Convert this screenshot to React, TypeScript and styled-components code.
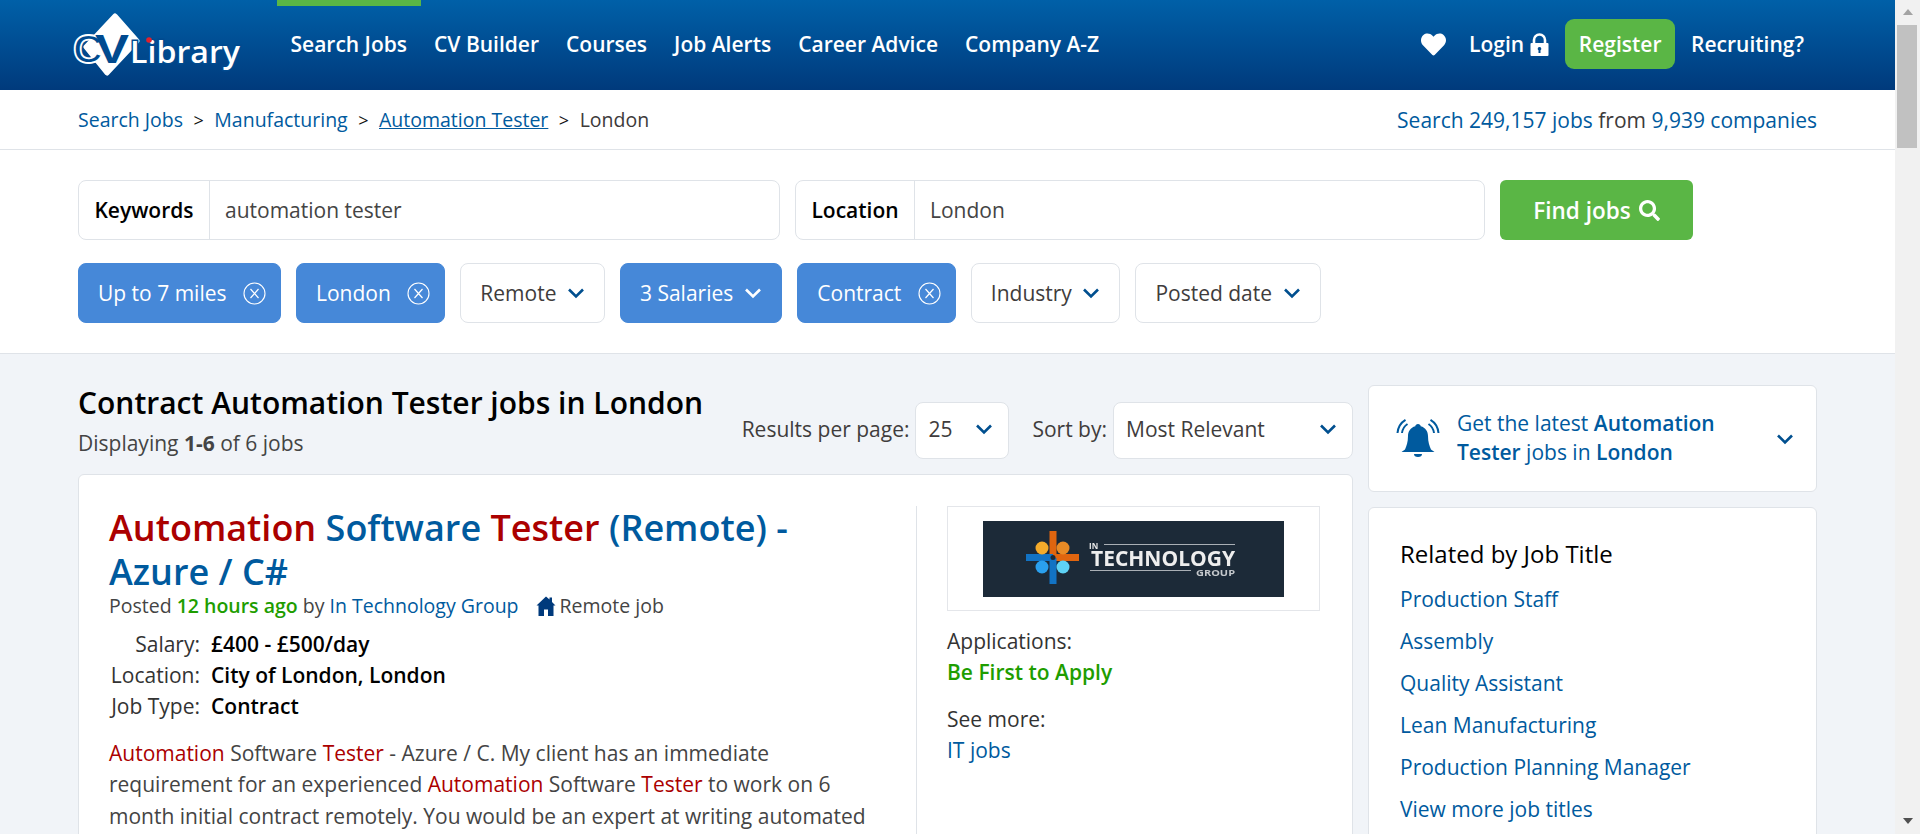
import React from "react";
import styled, { createGlobalStyle } from "styled-components";
import { FaHeart, FaSearch } from "react-icons/fa";

const GlobalStyle = createGlobalStyle`
  html, body {
    margin: 0;
    height: 100%;
    overflow: hidden;
  }
  body {
    font-family: "Open Sans", "Liberation Sans", sans-serif;
    font-size: 21px;
    color: #333;
    background: #f1f4f8;
  }
  a {
    color: inherit;
    text-decoration: none;
  }
`;

const linkBlue = "#005a9e";
const red = "#ab0000";

const Chevron = ({ color = "#004f8f" }: { color?: string }) => (
  <svg width="18" height="12" viewBox="0 0 18 12" fill="none">
    <path d="M2 2.5 9 9.5 16 2.5" stroke={color} strokeWidth="2.6" />
  </svg>
);

const CloseCircle = () => (
  <svg width="23" height="23" viewBox="0 0 23 23" fill="none" stroke="#fff">
    <circle cx="11.5" cy="11.5" r="10.5" strokeWidth="1.1" />
    <path d="M7.5 7 15.5 16M15.5 7 7.5 16" strokeWidth="1.2" />
  </svg>
);

const Logo = () => (
  <svg width="170" height="64" viewBox="0 0 170 64">
    <path
      d="M42 3 64 28 34 60 13 34Z"
      fill="#fff"
      stroke="#fff"
      strokeWidth="5"
      strokeLinejoin="round"
    />
    <text
      x="0"
      y="50"
      fontFamily="Liberation Sans"
      fontWeight="700"
      fontSize="41"
      fill="#004a8f"
      stroke="#fff"
      strokeWidth="1.8"
    >
      C
    </text>
    <text
      x="22"
      y="50"
      fontFamily="Liberation Sans"
      fontWeight="700"
      fontSize="40"
      fill="#004a8f"
      textLength="34"
      lengthAdjust="spacingAndGlyphs"
    >
      V
    </text>
    <text
      x="57"
      y="50"
      fontFamily="Open Sans"
      fontWeight="600"
      fontSize="31"
      fill="#fff"
      stroke="#004a8f"
      strokeWidth="3"
      paintOrder="stroke"
      textLength="110"
      lengthAdjust="spacingAndGlyphs"
    >
      Library
    </text>
    <circle cx="76" cy="27" r="2.8" fill="#e2202c" />
  </svg>
);

const Padlock = () => (
  <svg width="19" height="23" viewBox="0 0 19 23">
    <path d="M4 11V7a5.5 5.5 0 0 1 11 0v4" fill="none" stroke="#fff" strokeWidth="2.6" />
    <path
      fillRule="evenodd"
      d="M1.5 10h16a1 1 0 0 1 1 1v11a1 1 0 0 1-1 1h-16a1 1 0 0 1-1-1V11a1 1 0 0 1 1-1ZM9.5 14a1.8 1.8 0 0 0-1 3.3V20h2v-2.7a1.8 1.8 0 0 0-1-3.3Z"
      fill="#fff"
    />
  </svg>
);

const House = () => (
  <svg width="20" height="20" viewBox="0 0 20 20">
    <path d="M10 0.500 0.500 9.500H2.500V20H8V13.500H12V20H17.500V9.500H19.500L16 6V1.500H13.500V3.500Z" fill="#003a7c" />
  </svg>
);

const AlertBell = () => (
  <svg width="44" height="43" viewBox="0 0 44 43" fill="none">
    <path
      d="M22 7c-1.600 0-2.500 1-2.700 2.200C14.500 10.500 12 14.500 12 19c0 6-1.500 10-3 13.500L5.500 35h33L35 32.500C33.500 29 32 25 32 19c0-4.500-2.500-8.500-7.300-9.800C24.500 8 23.600 7 22 7Z"
      fill="#005a9e"
    />
    <path d="M18 37h8a4 3 0 0 1-8 0Z" fill="#005a9e" />
    <path
      d="M1.500 16C2 10 5 5.500 9.500 2.800M6 16C6.500 12 8.500 9 11.500 7M42.500 16C42 10 39 5.500 34.500 2.800M38 16C37.500 12 35.500 9 32.500 7"
      stroke="#005a9e"
      strokeWidth="2"
    />
  </svg>
);

const CompanyLogo = () => (
  <svg width="301" height="76" viewBox="0 0 301 76">
    <rect width="301" height="76" fill="#1c2a38" />
    <g filter="blur(0.4px)">
      <rect x="66.500" y="10" width="7" height="26" fill="#e0650f" />
      <rect x="70" y="33" width="26" height="7" fill="#e0650f" />
      <rect x="43" y="33" width="27" height="7" fill="#1273c4" />
      <rect x="66.500" y="37" width="7" height="26" fill="#1273c4" />
      <circle cx="59" cy="27" r="6.500" fill="#f4ab2b" />
      <circle cx="80" cy="27" r="6.500" fill="#e98b26" />
      <circle cx="59" cy="46" r="6.500" fill="#2aa0ee" />
      <circle cx="80" cy="46" r="6.500" fill="#5ed2f5" />
      <circle cx="70" cy="36.500" r="2.500" fill="#1c2a38" />
      <text x="106" y="28" fontFamily="Open Sans" fontWeight="700" fontSize="8" fill="#e8e8e8">
        IN
      </text>
      <path d="M121 23.500H252M107 49.500H208" stroke="#a9afb5" strokeWidth="1" />
      <text
        x="108"
        y="45"
        fontFamily="Open Sans"
        fontWeight="700"
        fontSize="21"
        fill="#eee"
        textLength="144"
        lengthAdjust="spacingAndGlyphs"
      >
        TECHNOLOGY
      </text>
      <text
        x="213"
        y="55"
        fontFamily="Open Sans"
        fontWeight="700"
        fontSize="8.500"
        fill="#c4c8cc"
        textLength="39"
        lengthAdjust="spacingAndGlyphs"
      >
        GROUP
      </text>
    </g>
  </svg>
);

const App = () => {
  return (
    <Screen>
      <GlobalStyle />
      <Page>
        <Header>
          <LogoLink href="#">
            <Logo />
          </LogoLink>
          <Nav>
            <NavItem href="#" $active>
              Search Jobs
            </NavItem>
            <NavItem href="#">CV Builder</NavItem>
            <NavItem href="#">Courses</NavItem>
            <NavItem href="#">Job Alerts</NavItem>
            <NavItem href="#">Career Advice</NavItem>
            <NavItem href="#">Company A-Z</NavItem>
          </Nav>
          <UserMenu>
            <HeartLink href="#">
              <FaHeart size={25} />
            </HeartLink>
            <LoginLink href="#">
              Login <Padlock />
            </LoginLink>
            <RegisterButton href="#">Register</RegisterButton>
            <RecruitingLink href="#">Recruiting?</RecruitingLink>
          </UserMenu>
        </Header>

        <BreadcrumbBar>
          <Breadcrumbs>
            <BlueLink href="#">Search Jobs</BlueLink>
            <Separator>&gt;</Separator>
            <BlueLink href="#">Manufacturing</BlueLink>
            <Separator>&gt;</Separator>
            <BlueLink href="#" $underline>
              Automation Tester
            </BlueLink>
            <Separator>&gt;</Separator>
            <span>London</span>
          </Breadcrumbs>
          <JobStats>
            <BlueLink href="#">Search 249,157 jobs</BlueLink> from{" "}
            <BlueLink href="#">9,939 companies</BlueLink>
          </JobStats>
        </BreadcrumbBar>

        <SearchSection>
          <SearchRow>
            <SearchField $width={702}>
              <FieldLabel $width={130}>Keywords</FieldLabel>
              <FieldValue>automation tester</FieldValue>
            </SearchField>
            <SearchField $width={690}>
              <FieldLabel $width={118}>Location</FieldLabel>
              <FieldValue>London</FieldValue>
            </SearchField>
            <FindButton>
              Find jobs <FaSearch size={21} />
            </FindButton>
          </SearchRow>
          <FilterRow>
            <Chip $active>
              Up to 7 miles
              <CloseCircle />
            </Chip>
            <Chip $active>
              London
              <CloseCircle />
            </Chip>
            <Chip>
              Remote
              <Chevron />
            </Chip>
            <Chip $active $menu>
              3 Salaries
              <Chevron color="#fff" />
            </Chip>
            <Chip $active>
              Contract
              <CloseCircle />
            </Chip>
            <Chip>
              Industry
              <Chevron />
            </Chip>
            <Chip>
              Posted date
              <Chevron />
            </Chip>
          </FilterRow>
        </SearchSection>

        <Main>
          <Results>
            <ResultsHead>
              <div>
                <PageTitle>Contract Automation Tester jobs in London</PageTitle>
                <Displaying>
                  Displaying <b>1-6</b> of 6 jobs
                </Displaying>
              </div>
              <Controls>
                <span>Results per page:</span>
                <SelectBox $width={94}>
                  25
                  <Chevron />
                </SelectBox>
                <SortLabel>Sort by:</SortLabel>
                <SelectBox $width={240}>
                  Most Relevant
                  <Chevron />
                </SelectBox>
              </Controls>
            </ResultsHead>

            <JobCard>
              <JobMain>
                <JobTitle>
                  <mark>Automation</mark> Software <mark>Tester</mark> (Remote) - Azure / C#
                </JobTitle>
                <JobMeta>
                  <span>
                    Posted <Fresh>12 hours ago</Fresh> by <BlueLink href="#">In Technology Group</BlueLink>
                  </span>
                  <RemoteTag>
                    <House />
                    Remote job
                  </RemoteTag>
                </JobMeta>
                <JobFacts>
                  <dt>Salary:</dt>
                  <dd>£400 - £500/day</dd>
                  <dt>Location:</dt>
                  <dd>City of London, London</dd>
                  <dt>Job Type:</dt>
                  <dd>Contract</dd>
                </JobFacts>
                <JobText>
                  <em>Automation</em> Software <em>Tester</em> - Azure / C. My client has an immediate
                  requirement for an experienced <em>Automation</em> Software <em>Tester</em> to work on 6
                  month initial contract remotely. You would be an expert at writing automated tests
                </JobText>
              </JobMain>
              <JobAside>
                <LogoFrame>
                  <CompanyLogo />
                </LogoFrame>
                <AsideBlock>
                  <div>Applications:</div>
                  <Fresh>Be First to Apply</Fresh>
                </AsideBlock>
                <AsideBlock>
                  <div>See more:</div>
                  <BlueLink href="#">IT jobs</BlueLink>
                </AsideBlock>
              </JobAside>
            </JobCard>
          </Results>

          <Sidebar>
            <AlertCard>
              <AlertBell />
              <AlertText>
                Get the latest <b>Automation Tester</b> jobs in <b>London</b>
              </AlertText>
              <Chevron />
            </AlertCard>
            <RelatedCard>
              <RelatedTitle>Related by Job Title</RelatedTitle>
              <RelatedLink href="#">Production Staff</RelatedLink>
              <RelatedLink href="#">Assembly</RelatedLink>
              <RelatedLink href="#">Quality Assistant</RelatedLink>
              <RelatedLink href="#">Lean Manufacturing</RelatedLink>
              <RelatedLink href="#">Production Planning Manager</RelatedLink>
              <RelatedLink href="#">View more job titles</RelatedLink>
            </RelatedCard>
          </Sidebar>
        </Main>
      </Page>
      <ScrollTrack>
        <ScrollArrow $dir="up" />
        <ScrollThumb />
        <ScrollArrow $dir="down" />
      </ScrollTrack>
    </Screen>
  );
};

const Screen = styled.div`
  display: flex;
  width: 1920px;
  height: 834px;
  overflow: hidden;
`;
const Page = styled.div`
  width: 1895px;
  flex-shrink: 0;
`;
const Header = styled.header`
  display: flex;
  align-items: flex-start;
  height: 90px;
  padding: 0 91px 0 73px;
  box-sizing: border-box;
  background: linear-gradient(#0060a8, #003a7c);
`;
const LogoLink = styled.a`
  display: block;
  width: 170px;
  margin: 13px 34px 0 0;
`;
const Nav = styled.nav`
  display: flex;
`;
const NavItem = styled.a<{ $active?: boolean }>`
  padding: 0 13.500px;
  height: 90px;
  box-sizing: border-box;
  font-size: 21px;
  font-weight: 600;
  color: #fff;
  border-top: 6px solid ${(p) => (p.$active ? "#5ab645" : "transparent")};
  line-height: 76px;
`;
const UserMenu = styled.div`
  display: flex;
  align-items: center;
  margin-left: auto;
  height: 88px;
  color: #fff;
  font-weight: 600;
`;
const HeartLink = styled.a`
  display: flex;
  margin-right: 23px;
`;
const LoginLink = styled.a`
  display: flex;
  align-items: center;
  gap: 6px;
  margin-right: 16px;
`;
const RegisterButton = styled.a`
  display: flex;
  align-items: center;
  justify-content: center;
  width: 110px;
  height: 50px;
  border-radius: 9px;
  background: #5ab645;
`;
const RecruitingLink = styled.a`
  margin-left: 16px;
`;
const BreadcrumbBar = styled.div`
  display: flex;
  align-items: center;
  justify-content: space-between;
  height: 60px;
  padding: 0 78px;
  background: #fff;
  border-bottom: 1px solid #dfe3e8;
  box-sizing: border-box;
`;
const Breadcrumbs = styled.div`
  display: flex;
  align-items: center;
  gap: 10.500px;
  font-size: 19.500px;
  color: #3d3a3a;
`;
const Separator = styled.span`
  color: #111;
  font-size: 18px;
`;
const BlueLink = styled.a<{ $underline?: boolean }>`
  color: ${linkBlue};
  text-decoration: ${(p) => (p.$underline ? "underline" : "none")};
`;
const JobStats = styled.div`
  color: #3d3a3a;
`;
const SearchSection = styled.section`
  height: 204px;
  padding: 30px 78px 0;
  box-sizing: border-box;
  background: #fff;
  border-bottom: 1px solid #dfe3e8;
`;
const SearchRow = styled.div`
  display: flex;
  gap: 15px;
`;
const SearchField = styled.div<{ $width: number }>`
  display: flex;
  width: ${(p) => p.$width}px;
  height: 60px;
  box-sizing: border-box;
  border: 1px solid #dfe3e8;
  border-radius: 8px;
`;
const FieldLabel = styled.div<{ $width: number }>`
  display: flex;
  align-items: center;
  justify-content: center;
  width: ${(p) => p.$width}px;
  border-right: 1px solid #dfe3e8;
  color: #000;
  font-weight: 600;
`;
const FieldValue = styled.div`
  display: flex;
  align-items: center;
  padding-left: 15px;
  color: #444;
`;
const FindButton = styled.button`
  display: flex;
  align-items: center;
  justify-content: center;
  gap: 8px;
  width: 193px;
  height: 60px;
  border: 0;
  border-radius: 6px;
  background: #5ab645;
  color: #fff;
  font-family: inherit;
  font-size: 22.500px;
  font-weight: 600;
`;
const FilterRow = styled.div`
  display: flex;
  gap: 15px;
  margin-top: 23px;
`;
const Chip = styled.div<{ $active?: boolean; $menu?: boolean }>`
  display: flex;
  align-items: center;
  gap: ${(p) => (p.$menu ? "11px" : p.$active ? "16.500px" : "10.500px")};
  height: 60px;
  padding: 0 ${(p) => (p.$active && !p.$menu ? "14px" : "19px")} 0 19px;
  box-sizing: border-box;
  border-radius: 8px;
  background: ${(p) => (p.$active ? "#4688d8" : "#fff")};
  border: 1px solid ${(p) => (p.$active ? "#4688d8" : "#dfe3e8")};
  color: ${(p) => (p.$active ? "#fff" : "#403c3c")};
`;
const Main = styled.main`
  display: grid;
  grid-template-columns: 1275px 449px;
  gap: 15px;
  padding: 31px 78px 0;
`;
const Results = styled.div``;
const ResultsHead = styled.div`
  display: flex;
  justify-content: space-between;
  height: 89px;
`;
const PageTitle = styled.h1`
  margin: 0;
  font-size: 30px;
  line-height: 36px;
  font-weight: 600;
  color: #000;
`;
const Displaying = styled.div`
  margin-top: 6px;
  line-height: 32px;
  color: #444;
`;
const Controls = styled.div`
  display: flex;
  align-items: center;
  gap: 6px;
  height: 57px;
  margin-top: 17px;
  color: #403c3c;
  span {
    margin-bottom: 3px;
  }
`;
const SortLabel = styled.span`
  margin-left: 17px;
`;
const SelectBox = styled.div<{ $width: number }>`
  display: flex;
  align-items: center;
  justify-content: space-between;
  width: ${(p) => p.$width}px;
  height: 57px;
  padding: 0 15px 3px 12px;
  box-sizing: border-box;
  background: #fff;
  border: 1px solid #dfe3e8;
  border-radius: 8px;
`;
const JobCard = styled.article`
  display: flex;
  padding: 31px 0 0 30px;
  box-sizing: border-box;
  height: 400px;
  background: #fff;
  border: 1px solid #dfe3e8;
  border-radius: 6px;
`;
const JobMain = styled.div`
  width: 808px;
  padding-right: 31px;
  box-sizing: border-box;
  border-right: 1px solid #dfe3e8;
`;
const JobTitle = styled.h2`
  margin: 0;
  font-size: 36px;
  line-height: 44px;
  font-weight: 600;
  color: ${linkBlue};
  mark {
    background: none;
    color: ${red};
  }
`;
const JobMeta = styled.div`
  display: flex;
  line-height: 24px;
  font-size: 19.500px;
  color: #444;
`;
const Fresh = styled.span`
  color: #1e9d00;
  font-weight: 600;
`;
const RemoteTag = styled.span`
  display: flex;
  align-items: center;
  gap: 4px;
  margin-left: 17px;
`;
const JobFacts = styled.dl`
  display: grid;
  grid-template-columns: 91px 1fr;
  column-gap: 11px;
  margin: 11px 0 0;
  line-height: 31.200px;
  dt {
    text-align: right;
    color: #333;
  }
  dd {
    margin: 0;
    font-weight: 600;
    color: #000;
  }
`;
const JobText = styled.p`
  margin: 15px 0 0;
  line-height: 31.600px;
  color: #444;
  em {
    font-style: normal;
    color: ${red};
  }
`;
const JobAside = styled.aside`
  width: 435px;
  padding: 0 32px 0 30px;
  box-sizing: border-box;
`;
const LogoFrame = styled.div`
  display: flex;
  align-items: center;
  justify-content: center;
  height: 103px;
  border: 1px solid #e4e6ea;
`;
const AsideBlock = styled.div`
  margin-top: 15px;
  line-height: 31px;
  color: #333;
  & + & {
    margin-top: 16px;
  }
`;
const Sidebar = styled.aside`
  display: flex;
  flex-direction: column;
  gap: 15px;
`;
const AlertCard = styled.div`
  display: flex;
  align-items: center;
  height: 107px;
  padding: 0 22px 0 27px;
  box-sizing: border-box;
  background: #fff;
  border: 1px solid #dfe3e8;
  border-radius: 6px;
`;
const AlertText = styled.div`
  width: 300px;
  margin: -2px auto 0 17px;
  line-height: 29px;
  color: ${linkBlue};
  b {
    font-weight: 600;
  }
`;
const RelatedCard = styled.div`
  display: flex;
  flex-direction: column;
  height: 400px;
  padding: 28px 31px;
  box-sizing: border-box;
  background: #fff;
  border: 1px solid #dfe3e8;
  border-radius: 6px;
`;
const RelatedTitle = styled.h3`
  margin: 0 0 6px;
  font-size: 24px;
  font-weight: 400;
  line-height: 36px;
  color: #000;
`;
const RelatedLink = styled.a`
  line-height: 42px;
  color: ${linkBlue};
`;
const ScrollTrack = styled.div`
  display: flex;
  flex-direction: column;
  width: 25px;
  height: 834px;
  background: #f1f1f1;
`;
const ScrollArrow = styled.div<{ $dir: "up" | "down" }>`
  height: 25px;
  flex-shrink: 0;
  &::after {
    content: "";
    display: block;
    width: 0;
    margin: 9px auto 0;
    border-left: 5.500px solid transparent;
    border-right: 5.500px solid transparent;
    ${(p) =>
      p.$dir === "up"
        ? "border-bottom: 6px solid #a3a3a3;"
        : "border-top: 6px solid #505050;"}
  }
`;
const ScrollThumb = styled.div`
  width: 20px;
  height: 123px;
  margin-left: 2px;
  margin-bottom: auto;
  background: #c1c1c1;
`;

export default App;
